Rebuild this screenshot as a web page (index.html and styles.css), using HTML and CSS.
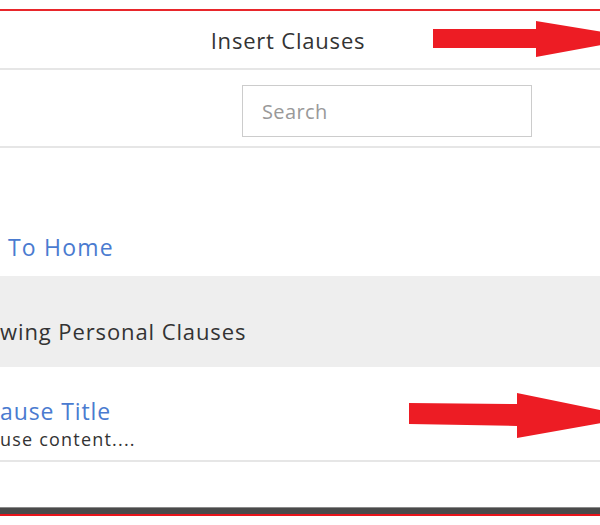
FILE: index.html
```html
<!DOCTYPE html>
<html lang="en">
<head>
    <meta charset="UTF-8">
    <title>Insert Clauses</title>
    <link rel="stylesheet" href="styles.css">
</head>
<body>

<div class="page">
    <header class="pane-header">
        <h1>Insert Clauses</h1>
    </header>

    <div class="search-row">
        <input type="text" class="search" placeholder="Search">
    </div>

    <div class="back-row">
        <a href="#" class="back-link">To Home</a>
    </div>

    <div class="list-heading">wing Personal Clauses</div>

    <div class="clause">
        <a href="#" class="clause-title">ause Title</a>
        <div class="clause-text">use content....</div>
    </div>

    <div class="spacer"></div>
    <div class="bottom-bar"></div>
</div>

<!-- annotation arrows -->
<svg class="arrows" width="600" height="525" viewBox="0 0 600 525">
    <polygon points="433,29 536,29 536,21 640,38 536,57 536,48 433,48" fill="#ed1c24"/>
    <polygon points="409,403 517,404 517,393 635,417 517,438 517,426 409,424" fill="#ed1c24"/>
</svg>

</body>
</html>
```

FILE: styles.css
```css
html, body {
    margin: 0;
    padding: 0;
    background: white;
    overflow: hidden;
}
body {
    font-family: "Open Sans", Lato, sans-serif;
    color: #333;
    height: 525px;
    position: relative;
    padding-top: 9px;
    box-sizing: border-box;
}
.page {
    border-top: 2px solid #e8262b;
}
.pane-header {
    height: 57px;
    border-bottom: 2px solid #e6e6e6;
    display: flex;
    align-items: center;
    justify-content: center;
    padding-right: 24px;
}
.pane-header h1 {
    margin: 0;
    font-size: 22px;
    letter-spacing: 0.8px;
    font-weight: normal;
    color: #333;
}
.search-row {
    display: flex;
    justify-content: flex-end;
    padding: 15px 68px 9px 0;
    border-bottom: 2px solid #e6e6e6;
}
.search {
    width: 290px;
    height: 52px;
    box-sizing: border-box;
    border: 1px solid #ccc;
    padding: 0 19px;
    font-family: inherit;
    font-size: 20px;
    letter-spacing: 0.4px;
    color: #333;
}
.search::placeholder {
    color: #999;
}
.back-row {
    height: 128px;
    display: flex;
    align-items: flex-end;
    padding-left: 8px;
}
.back-link {
    font-size: 23px;
    letter-spacing: 1.2px;
    color: #4a7bd0;
    text-decoration: none;
    margin-bottom: 13px;
}
.list-heading {
    background: #eeeeee;
    height: 91px;
    box-sizing: border-box;
    padding: 40px 0 0 0;
    font-size: 22px;
    letter-spacing: 0.9px;
}
.clause {
    height: 95px;
    box-sizing: border-box;
    padding: 28px 0 0 0;
    border-bottom: 2px solid #e6e6e6;
}
.clause-title {
    display: block;
    font-size: 23px;
    letter-spacing: 0.9px;
    color: #4a7bd0;
    text-decoration: none;
}
.clause-text {
    font-size: 18px;
    letter-spacing: 1.2px;
    margin-top: 0;
}
.spacer {
    height: 45px;
}
.bottom-bar {
    height: 6px;
    background: #4a4a4a;
    border-top: 1px solid #8a8a8a;
    border-bottom: 2px solid #e8141b;
}
.arrows {
    position: absolute;
    left: 0;
    top: 0;
}
```
